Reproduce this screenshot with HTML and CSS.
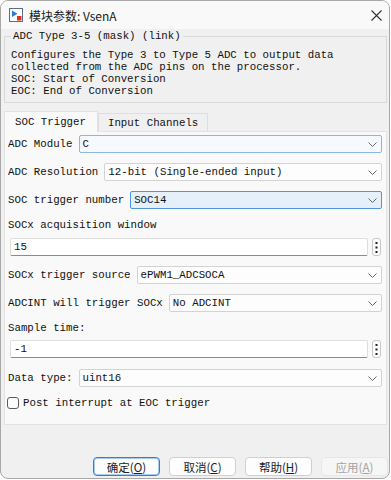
FILE: index.html
```html
<!DOCTYPE html>
<html lang="zh-CN">
<head>
  <meta charset="UTF-8" />
  <title>模块参数: VsenA</title>
  <link rel="stylesheet" href="styles.css">
</head>
<body>
  <div class="window">
    <div class="titlebar">
      <svg class="app-icon" width="14" height="14" viewBox="0 0 14 14">
        <rect x="0.5" y="0.5" width="13" height="13" fill="#fff" stroke="#5a6e8c"/>
        <path d="M3 2.5 L3 9 L8.5 5.8 Z" fill="#2a7fd4"/>
        <rect x="8" y="8" width="4.5" height="4.5" fill="#e0301e"/>
      </svg>
      <span class="title">模块参数: VsenA</span>
      <svg class="close" width="11" height="11" viewBox="0 0 11 11">
        <path d="M0.5 0.5 L10.5 10.5 M10.5 0.5 L0.5 10.5" stroke="#333" stroke-width="1.1"/>
      </svg>
    </div>

    <fieldset class="desc">
      <legend>ADC Type 3-5 (mask) (link)</legend>
      <div class="desc-text">Configures the Type 3 to Type 5 ADC to output data
collected from the ADC pins on the processor.
SOC: Start of Conversion
EOC: End of Conversion</div>
    </fieldset>

    <div class="tabs">
      <div class="tab active">SOC Trigger</div>
      <div class="tab">Input Channels</div>
    </div>

    <div class="panel">
      <div class="row">
        <span class="label">ADC Module</span>
        <div class="combo hover"><span>C</span><svg class="chev" width="9" height="5" viewBox="0 0 9 5"><polyline points="0.5,0.5 4.5,4.5 8.5,0.5" fill="none" stroke="#666"/></svg></div>
      </div>
      <div class="row">
        <span class="label">ADC Resolution</span>
        <div class="combo"><span>12-bit (Single-ended input)</span><svg class="chev" width="9" height="5" viewBox="0 0 9 5"><polyline points="0.5,0.5 4.5,4.5 8.5,0.5" fill="none" stroke="#666"/></svg></div>
      </div>
      <div class="row">
        <span class="label">SOC trigger number</span>
        <div class="combo focus"><span>SOC14</span><svg class="chev" width="9" height="5" viewBox="0 0 9 5"><polyline points="0.5,0.5 4.5,4.5 8.5,0.5" fill="none" stroke="#666"/></svg></div>
      </div>

      <div class="field-label first">SOCx acquisition window</div>
      <div class="edit-row">
        <div class="edit">15</div>
        <div class="more"><svg width="3" height="11" viewBox="0 0 3 11"><rect x="0.5" y="0" width="2" height="2" fill="#222"/><rect x="0.5" y="4.5" width="2" height="2" fill="#222"/><rect x="0.5" y="9" width="2" height="2" fill="#222"/></svg></div>
      </div>

      <div class="row gap-top">
        <span class="label">SOCx trigger source</span>
        <div class="combo"><span>ePWM1_ADCSOCA</span><svg class="chev" width="9" height="5" viewBox="0 0 9 5"><polyline points="0.5,0.5 4.5,4.5 8.5,0.5" fill="none" stroke="#666"/></svg></div>
      </div>
      <div class="row">
        <span class="label">ADCINT will trigger SOCx</span>
        <div class="combo"><span>No ADCINT</span><svg class="chev" width="9" height="5" viewBox="0 0 9 5"><polyline points="0.5,0.5 4.5,4.5 8.5,0.5" fill="none" stroke="#666"/></svg></div>
      </div>

      <div class="field-label">Sample time:</div>
      <div class="edit-row tight">
        <div class="edit">-1</div>
        <div class="more"><svg width="3" height="11" viewBox="0 0 3 11"><rect x="0.5" y="0" width="2" height="2" fill="#222"/><rect x="0.5" y="4.5" width="2" height="2" fill="#222"/><rect x="0.5" y="9" width="2" height="2" fill="#222"/></svg></div>
      </div>

      <div class="row gap-top wide">
        <span class="label">Data type:</span>
        <div class="combo"><span>uint16</span><svg class="chev" width="9" height="5" viewBox="0 0 9 5"><polyline points="0.5,0.5 4.5,4.5 8.5,0.5" fill="none" stroke="#666"/></svg></div>
      </div>

      <div class="check-row">
        <span class="checkbox"></span>
        <span>Post interrupt at EOC trigger</span>
      </div>
    </div>

    <div class="buttons">
      <div class="btn default">确定(<u>O</u>)</div>
      <div class="btn">取消(<u>C</u>)</div>
      <div class="btn">帮助(<u>H</u>)</div>
      <div class="btn disabled">应用(<u>A</u>)</div>
    </div>
  </div>
</body>
</html>
```
FILE: styles.css
```css
body { margin:0; background:#fff; }
.window { width:390px; height:479px; box-sizing:border-box; background:#f0f0f0; border:1px solid #a8a8a8; border-radius:8px; overflow:hidden; font-family:"Liberation Mono", "Noto Sans CJK SC", monospace; font-size:10.75px; color:#111; }

.titlebar { height:28px; display:flex; align-items:center; background:#f9f9f9; padding-left:8px; }
.app-icon { flex:none; }
.title { margin-left:6px; font-family:"Noto Sans CJK SC", "Noto Sans", sans-serif; font-size:12px; color:#1a1a1a; flex:1; }
.close { margin-right:7px; }

.desc { margin:1px 2px 0 3px; border:1px solid #d9d9d9; padding:7px 6px 5px; }
.desc legend { padding:0 2px; line-height:12px; }
.desc-text { white-space:pre; line-height:12px; }

.tabs { display:flex; align-items:flex-end; margin:7px 2px 0 3px; height:21px; }
.tab { height:18px; line-height:18px; padding:0 9px; background:#f0f0f0; border:1px solid #dedede; border-bottom:none; box-sizing:border-box; }
.tab.active { height:21px; line-height:21px; padding:0 11px 0 10px; background:#f9f9f9; border-color:#e2e2e2; position:relative; top:1px; }

.panel { margin:0 2px 0 3px; background:#f9f9f9; border:1px solid #e2e2e2; padding:3px 4px 15px 3px; }

.row { display:flex; align-items:center; gap:6px; height:18px; margin-bottom:10px; }
.row.gap-top { margin-top:10px; }
.row.wide { margin-top:11px; }
.label { white-space:nowrap; }
.combo { flex:1; height:18px; box-sizing:border-box; display:flex; align-items:center; justify-content:space-between; padding:0 4px 0 3px; background:#fdfdfd; border:1px solid #d3d3d3; border-radius:2px; }
.combo.hover { background:#f6f9fd; border-color:#8db5e2; }
.combo.focus { background:#e6f0fb; border-color:#4f94dc; }

.field-label { line-height:12px; margin-top:10px; }
.field-label.first { margin-top:0; }
.edit-row { display:flex; align-items:center; gap:4px; margin-top:7px; padding-left:2px; }
.edit-row.tight { margin-top:6px; }
.edit { flex:1; height:18px; box-sizing:border-box; line-height:16px; padding-left:3px; background:#fff; border:1px solid #dedede; border-bottom-color:#8a8a8a; border-radius:2px; }
.more { width:9px; height:18px; box-sizing:border-box; display:flex; align-items:center; justify-content:center; background:#fdfdfd; border:1px solid #c8c8c8; border-radius:3px; margin-right:1px; }

.check-row { display:flex; align-items:center; gap:4px; margin-top:9px; margin-left:-1px; line-height:12px; }
.checkbox { width:12px; height:12px; box-sizing:border-box; border:1px solid #5c5c5c; border-radius:3px; background:#fdfdfd; }

.buttons { display:flex; justify-content:flex-end; gap:9px; margin-top:32px; padding-right:1px; }
.btn { width:67px; height:19px; box-sizing:border-box; display:flex; align-items:center; justify-content:center; font-family:"Noto Sans CJK SC", sans-serif; font-size:11.5px; color:#222; background:#fdfdfd; border:1px solid #d0d0d0; border-radius:4px; }
.btn.default { border-color:#2f7fd0; box-shadow:inset 0 0 0 1px #a8cbef; }
.btn.disabled { color:#a3a3a3; background:#f6f6f6; border-color:#e6e6e6; }
```
